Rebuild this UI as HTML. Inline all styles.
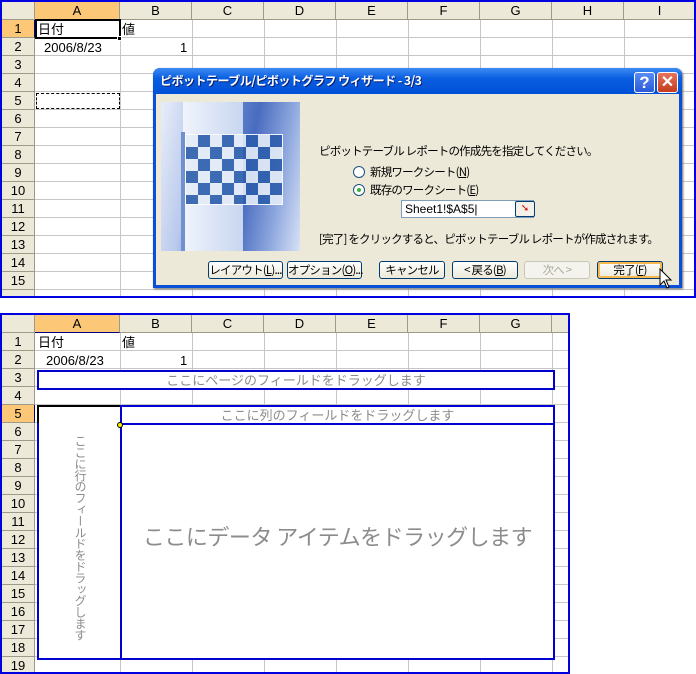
<!DOCTYPE html>
<html><head><meta charset="utf-8">
<style>
*{margin:0;padding:0;box-sizing:border-box}
body{width:696px;height:674px;background:#fff;position:relative;overflow:hidden;font-family:"Liberation Sans","Noto Sans CJK JP",sans-serif;font-size:13px;color:#000}
.a{position:absolute}
.panel{position:absolute;border:2px solid #0000e0;overflow:hidden;background:#fff}
.hdr{position:absolute;background:#ece9d8;border-right:1px solid #9d9a8a;border-bottom:1px solid #9d9a8a;text-align:center;font-size:13px;line-height:17px;font-family:"Liberation Sans","Noto Sans CJK JP",sans-serif}
.rows{position:absolute;background:repeating-linear-gradient(to bottom,transparent 0 17px,#c6c6c6 17px 18px)}
.vl{position:absolute;width:1px;background:#c6c6c6}
.gray{color:#8c8c8c;font-family:"Noto Sans CJK JP",sans-serif}
.dt{position:absolute;white-space:nowrap;font-size:11.5px;letter-spacing:-0.8px;line-height:14px;font-family:"Noto Sans CJK JP",sans-serif}
.btn{position:absolute;height:18px;border:1px solid #003c74;border-radius:3px;background:linear-gradient(#fff,#ece9d8);font-size:11.5px;letter-spacing:-0.8px;line-height:16px;text-align:center;white-space:nowrap;font-family:"Noto Sans CJK JP",sans-serif}
</style></head><body>

<div class="panel" style="left:0;top:0;width:696px;height:298px">
  <div class="rows" style="left:33px;top:18px;width:660px;height:280px"></div>
  <div class="vl" style="left:118px;top:18px;height:280px"></div>
  <div class="vl" style="left:190px;top:18px;height:280px"></div>
  <div class="vl" style="left:262px;top:18px;height:280px"></div>
  <div class="vl" style="left:334px;top:18px;height:280px"></div>
  <div class="vl" style="left:406px;top:18px;height:280px"></div>
  <div class="vl" style="left:478px;top:18px;height:280px"></div>
  <div class="vl" style="left:550px;top:18px;height:280px"></div>
  <div class="vl" style="left:622px;top:18px;height:280px"></div>
  <div class="hdr" style="left:0;top:0;width:33px;height:18px"></div>
  <div class="hdr" style="left:33px;top:0;width:85px;height:18px;background:#fcc878;border-bottom:1px solid #000080">A</div>
  <div class="hdr" style="left:118px;top:0;width:72px;height:18px">B</div>
  <div class="hdr" style="left:190px;top:0;width:72px;height:18px">C</div>
  <div class="hdr" style="left:262px;top:0;width:72px;height:18px">D</div>
  <div class="hdr" style="left:334px;top:0;width:72px;height:18px">E</div>
  <div class="hdr" style="left:406px;top:0;width:72px;height:18px">F</div>
  <div class="hdr" style="left:478px;top:0;width:72px;height:18px">G</div>
  <div class="hdr" style="left:550px;top:0;width:72px;height:18px">H</div>
  <div class="hdr" style="left:622px;top:0;width:72px;height:18px">I</div>
  <div class="hdr" style="left:0;top:18px;width:33px;height:18px;background:#fcc878;border-right:1px solid #000080">1</div>
  <div class="hdr" style="left:0;top:36px;width:33px;height:18px">2</div>
  <div class="hdr" style="left:0;top:54px;width:33px;height:18px">3</div>
  <div class="hdr" style="left:0;top:72px;width:33px;height:18px">4</div>
  <div class="hdr" style="left:0;top:90px;width:33px;height:18px">5</div>
  <div class="hdr" style="left:0;top:108px;width:33px;height:18px">6</div>
  <div class="hdr" style="left:0;top:126px;width:33px;height:18px">7</div>
  <div class="hdr" style="left:0;top:144px;width:33px;height:18px">8</div>
  <div class="hdr" style="left:0;top:162px;width:33px;height:18px">9</div>
  <div class="hdr" style="left:0;top:180px;width:33px;height:18px">10</div>
  <div class="hdr" style="left:0;top:198px;width:33px;height:18px">11</div>
  <div class="hdr" style="left:0;top:216px;width:33px;height:18px">12</div>
  <div class="hdr" style="left:0;top:234px;width:33px;height:18px">13</div>
  <div class="hdr" style="left:0;top:252px;width:33px;height:18px">14</div>
  <div class="hdr" style="left:0;top:270px;width:33px;height:18px">15</div>
  <div class="hdr" style="left:0;top:288px;width:33px;height:18px"></div>
  <div class="a" style="left:33px;top:17px;width:86px;height:20px;border:2px solid #000;background:#fff"></div>
  <div class="a" style="left:115px;top:34px;width:5px;height:5px;background:#000;border:1px solid #fff"></div>
  <div class="a" style="left:36px;top:19px;line-height:17px">日付</div>
  <div class="a" style="left:120px;top:19px;line-height:17px">値</div>
  <div class="a" style="left:42px;top:37px;line-height:17px">2006/8/23</div>
  <div class="a" style="left:178px;top:37px;line-height:17px">1</div>
  <div class="a" style="left:34px;top:91px;width:84px;height:16px;border:1px dashed #000;background:#fff"></div>
</div>

<div class="a" style="left:153px;top:68px;width:529px;height:220px;background:#0a4fd8;border-radius:7px 7px 0 0;box-shadow:1px 1px 2px #666">
  <div class="a" style="left:0;top:0;width:529px;height:26px;border-radius:7px 7px 0 0;background:linear-gradient(#3d8bf5,#0a5ee0 40%,#0050d8)"></div>
  <div class="a" style="left:7px;top:4px;color:#fff;font-weight:bold;font-size:12px;letter-spacing:-0.5px;line-height:18px;white-space:nowrap;font-family:'Noto Sans CJK JP',sans-serif;text-shadow:1px 1px #0a1e6e">ピボットテーブル/ピボットグラフ ウィザード - 3/3</div>
  <div class="a" style="left:481px;top:4px;width:21px;height:21px;border:1px solid #fff;border-radius:3px;background:linear-gradient(#5a8cf5,#2a5ad8);color:#fff;font-weight:bold;font-size:17px;line-height:19px;text-align:center">?</div>
  <div class="a" style="left:504px;top:4px;width:21px;height:21px;border:1px solid #fff;border-radius:3px;background:linear-gradient(#e8745a,#c43c1c);color:#fff;font-weight:bold;font-size:16px;line-height:19px;text-align:center">✕</div>
  <div class="a" style="left:3px;top:26px;width:523px;height:191px;background:#ece9d8">
    <div class="a" style="left:5px;top:8px;width:139px;height:149px;overflow:hidden;background:linear-gradient(100deg,#e8eefa 0,#b8c8ec 25%,#6a8cd0 40%,#4a6cc0 60%,#8aa4dc 80%,#d8e2f6 100%)">
      <div class="a" style="left:22px;top:0;width:60px;height:149px;background:linear-gradient(90deg,#f0f4fc,#c8d6f0)"></div>
      <div class="a" style="left:20px;top:30px;width:4px;height:119px;background:#7090d0"></div>
      <div class="a" style="left:24px;top:32px;width:98px;height:71px;background:repeating-conic-gradient(#2c5eac 0 25%,#e4ecf8 0 50%) 0 0/24px 24px;border:1px solid #fff;opacity:.9"></div>
    </div>
    <div class="dt" style="left:163px;top:50px">ピボットテーブル レポートの作成先を指定してください。</div>
    <div class="a" style="left:197px;top:72px;width:12px;height:12px;border:1px solid #1c5180;border-radius:50%;background:#fff"></div>
    <div class="dt" style="left:214px;top:71px">新規ワークシート(<u>N</u>)</div>
    <div class="a" style="left:197px;top:90px;width:12px;height:12px;border:1px solid #1c5180;border-radius:50%;background:#fff"><div class="a" style="left:3px;top:3px;width:4px;height:4px;border-radius:50%;background:#3cb43c"></div></div>
    <div class="dt" style="left:214px;top:89px">既存のワークシート(<u>E</u>)</div>
    <div class="a" style="left:245px;top:106px;width:133px;height:18px;border:1px solid #7f9db9;background:#fff;font-size:12px;line-height:16px;padding-left:3px">Sheet1!$A$5|</div>
    <div class="a" style="left:359px;top:107px;width:20px;height:16px;border:1px solid #003c74;border-radius:2px;background:#f4f2e8;color:#c00;font-size:10px;line-height:14px;text-align:center">➘</div>
    <div class="dt" style="left:163px;top:138px">[完了] をクリックすると、ピボットテーブル レポートが作成されます。</div>
    <div class="btn" style="left:52px;top:167px;width:75px">レイアウト(<u>L</u>)...</div>
    <div class="btn" style="left:131px;top:167px;width:75px">オプション(<u>O</u>)...</div>
    <div class="btn" style="left:223px;top:167px;width:66px">キャンセル</div>
    <div class="btn" style="left:296px;top:167px;width:66px">&lt; 戻る(<u>B</u>)</div>
    <div class="btn" style="left:368px;top:167px;width:66px;border-color:#c9c7ba;color:#aca899;background:#f4f3ee">次へ &gt;</div>
    <div class="btn" style="left:441px;top:167px;width:66px;box-shadow:inset 0 0 0 2px #f8b850">完了(<u>F</u>)</div>
    <svg class="a" style="left:503px;top:174px" width="14" height="22" viewBox="0 0 14 22"><path d="M1 1 L1 17 L5 13 L8 20 L10 19 L7 12 L12 12 Z" fill="#fff" stroke="#000" stroke-width="1"/></svg>
  </div>
</div>

<div class="panel" style="left:0;top:313px;width:570px;height:361px">
  <div class="rows" style="left:33px;top:18px;width:540px;height:345px"></div>
  <div class="vl" style="left:118px;top:18px;height:345px"></div>
  <div class="vl" style="left:190px;top:18px;height:345px"></div>
  <div class="vl" style="left:262px;top:18px;height:345px"></div>
  <div class="vl" style="left:334px;top:18px;height:345px"></div>
  <div class="vl" style="left:406px;top:18px;height:345px"></div>
  <div class="vl" style="left:478px;top:18px;height:345px"></div>
  <div class="vl" style="left:550px;top:18px;height:345px"></div>
  <div class="hdr" style="left:0;top:0;width:33px;height:18px"></div>
  <div class="hdr" style="left:33px;top:0;width:85px;height:18px;background:#fcc878;border-bottom:1px solid #000080">A</div>
  <div class="hdr" style="left:118px;top:0;width:72px;height:18px">B</div>
  <div class="hdr" style="left:190px;top:0;width:72px;height:18px">C</div>
  <div class="hdr" style="left:262px;top:0;width:72px;height:18px">D</div>
  <div class="hdr" style="left:334px;top:0;width:72px;height:18px">E</div>
  <div class="hdr" style="left:406px;top:0;width:72px;height:18px">F</div>
  <div class="hdr" style="left:478px;top:0;width:72px;height:18px">G</div>
  <div class="hdr" style="left:550px;top:0;width:72px;height:18px"></div>
  <div class="hdr" style="left:0;top:18px;width:33px;height:18px">1</div>
  <div class="hdr" style="left:0;top:36px;width:33px;height:18px">2</div>
  <div class="hdr" style="left:0;top:54px;width:33px;height:18px">3</div>
  <div class="hdr" style="left:0;top:72px;width:33px;height:18px">4</div>
  <div class="hdr" style="left:0;top:90px;width:33px;height:18px;background:#fcc878;border-right:1px solid #000080">5</div>
  <div class="hdr" style="left:0;top:108px;width:33px;height:18px">6</div>
  <div class="hdr" style="left:0;top:126px;width:33px;height:18px">7</div>
  <div class="hdr" style="left:0;top:144px;width:33px;height:18px">8</div>
  <div class="hdr" style="left:0;top:162px;width:33px;height:18px">9</div>
  <div class="hdr" style="left:0;top:180px;width:33px;height:18px">10</div>
  <div class="hdr" style="left:0;top:198px;width:33px;height:18px">11</div>
  <div class="hdr" style="left:0;top:216px;width:33px;height:18px">12</div>
  <div class="hdr" style="left:0;top:234px;width:33px;height:18px">13</div>
  <div class="hdr" style="left:0;top:252px;width:33px;height:18px">14</div>
  <div class="hdr" style="left:0;top:270px;width:33px;height:18px">15</div>
  <div class="hdr" style="left:0;top:288px;width:33px;height:18px">16</div>
  <div class="hdr" style="left:0;top:306px;width:33px;height:18px">17</div>
  <div class="hdr" style="left:0;top:324px;width:33px;height:18px">18</div>
  <div class="hdr" style="left:0;top:342px;width:33px;height:18px">19</div>
  <div class="a" style="left:36px;top:19px;line-height:17px">日付</div>
  <div class="a" style="left:120px;top:19px;line-height:17px">値</div>
  <div class="a" style="left:44px;top:37px;line-height:17px">2006/8/23</div>
  <div class="a" style="left:178px;top:37px;line-height:17px">1</div>
  <div class="a gray" style="left:35px;top:55px;width:518px;height:20px;border:2px solid #0000d0;background:#fff;text-align:center;font-size:13px;line-height:15px;white-space:nowrap">ここにページのフィールドをドラッグします</div>
  <div class="a" style="left:35px;top:90px;width:85px;height:20px;border:2px solid #000;border-bottom-color:#f0f000;border-right-color:#f0f000;background:#fff"></div>
  <div class="a gray" style="left:118px;top:90px;width:435px;height:20px;border:2px solid #0000d0;background:#fff;text-align:center;font-size:13px;line-height:15px;white-space:nowrap">ここに列のフィールドをドラッグします</div>
  <div class="a" style="left:35px;top:108px;width:85px;height:237px;border:2px solid #0000d0;border-top:none;background:#fff"></div>
  <div class="a gray" style="left:68px;top:120px;width:20px;writing-mode:vertical-rl;font-size:12px;letter-spacing:-0.6px;line-height:20px;white-space:nowrap">ここに行のフィールドをドラッグします</div>
  <div class="a gray" style="left:118px;top:108px;width:435px;height:237px;border:2px solid #0000d0;background:#fff;text-align:center;font-size:22px;line-height:22px;padding-top:100px;white-space:nowrap;letter-spacing:-0.5px">ここにデータ アイテムをドラッグします</div>
  <div class="a" style="left:115px;top:107px;width:6px;height:6px;border-radius:50%;background:#f0f000;border:1px solid #000"></div>
</div>
</body></html>
